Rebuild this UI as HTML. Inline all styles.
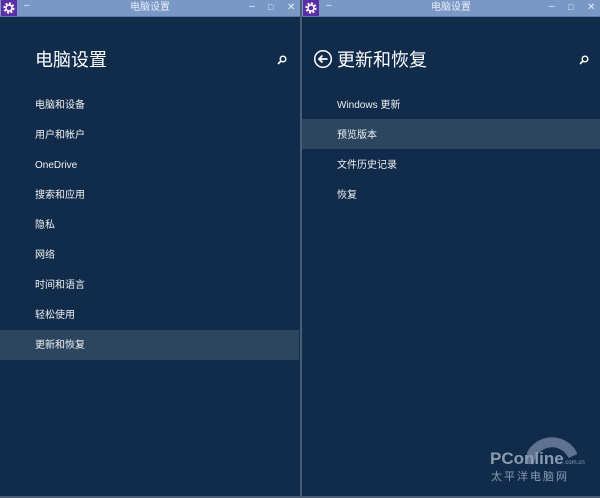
<!DOCTYPE html>
<html><head><meta charset="utf-8"><style>
*{margin:0;padding:0;box-sizing:border-box}
body{width:600px;height:498px;background:#4a5d75;position:relative;overflow:hidden;font-family:"Liberation Sans","Noto Sans CJK SC",sans-serif;color:#fff}
.win{position:absolute;top:0;height:496px;background:#112c4b}
.tb{position:absolute;left:0;right:0;top:0;height:17px;background:#7a98c6;border-bottom:1px solid #5a78a6}
.gear{position:absolute;left:1px;top:0;width:16px;height:16px;background:#5b2ea6}
.tt{position:absolute;left:0;right:0;top:2px;text-align:center;font-size:10px;line-height:12px;color:#e8eef8}
.btn{position:absolute;top:2px;font-size:10px;color:#e8eef8}
.h1{position:absolute;font-size:18px;line-height:22px;color:#fff}
.it{position:absolute;left:35px;font-size:10px;line-height:14px;color:#f0f0f0}
.hl{position:absolute;left:0;right:0;height:30px;background:#2d4660}
</style></head><body>
<div class="win" style="left:0;width:300px">
 <div class="tb"><div class="gear"><svg width="16" height="16" viewBox="0 0 16 16"><circle cx="8" cy="8" r="4.5" fill="none" stroke="#fff" stroke-width="2.2" stroke-dasharray="2 1.5"/><circle cx="8" cy="8" r="3" fill="none" stroke="#fff" stroke-width="1.4"/></svg></div>
 <div class="btn" style="left:24px;top:0">–</div><div class="tt">电脑设置</div>
 <div class="btn" style="left:249px;top:1px">–</div><div class="btn" style="left:268px;font-size:9px">□</div><div class="btn" style="left:287px">✕</div></div>
 <div class="h1" style="left:35px;top:49px">电脑设置</div>
 <svg style="position:absolute;left:277px;top:55px" width="10" height="10" viewBox="0 0 10 10"><circle cx="6" cy="4" r="2.8" fill="none" stroke="#fff" stroke-width="1.4"/><path d="M4 6L1 9" stroke="#fff" stroke-width="1.6"/></svg>
 <div class="hl" style="top:330px;right:1px"></div>
 <div class="it" style="top:99px">电脑和设备</div>
 <div class="it" style="top:129px">用户和帐户</div>
 <div class="it" style="top:159px">OneDrive</div>
 <div class="it" style="top:189px">搜索和应用</div>
 <div class="it" style="top:219px">隐私</div>
 <div class="it" style="top:249px">网络</div>
 <div class="it" style="top:279px">时间和语言</div>
 <div class="it" style="top:309px">轻松使用</div>
 <div class="it" style="top:339px">更新和恢复</div>
</div>
<div class="win" style="left:302px;width:298px">
 <div class="tb"><div class="gear"><svg width="16" height="16" viewBox="0 0 16 16"><circle cx="8" cy="8" r="4.5" fill="none" stroke="#fff" stroke-width="2.2" stroke-dasharray="2 1.5"/><circle cx="8" cy="8" r="3" fill="none" stroke="#fff" stroke-width="1.4"/></svg></div>
 <div class="btn" style="left:24px;top:0">–</div><div class="tt">电脑设置</div>
 <div class="btn" style="left:247px;top:1px">–</div><div class="btn" style="left:266px;font-size:9px">□</div><div class="btn" style="left:285px">✕</div></div>
 <svg style="position:absolute;left:11px;top:49px" width="20" height="20" viewBox="0 0 20 20"><circle cx="10" cy="10" r="8.3" fill="none" stroke="#fff" stroke-width="1.5"/><path d="M14.5 10H6M9.5 6.5L6 10l3.5 3.5" fill="none" stroke="#fff" stroke-width="1.8"/></svg>
 <div class="h1" style="left:35px;top:49px">更新和恢复</div>
 <svg style="position:absolute;left:277px;top:55px" width="10" height="10" viewBox="0 0 10 10"><circle cx="6" cy="4" r="2.8" fill="none" stroke="#fff" stroke-width="1.4"/><path d="M4 6L1 9" stroke="#fff" stroke-width="1.6"/></svg>
 <div class="hl" style="top:119px"></div>
 <div class="it" style="top:99px">Windows 更新</div>
 <div class="it" style="top:129px">预览版本</div>
 <div class="it" style="top:159px">文件历史记录</div>
 <div class="it" style="top:189px">恢复</div>
 <svg style="position:absolute;left:225px;top:436px" width="50" height="30" viewBox="0 0 50 30"><path d="M2 28A23 23 0 0 1 46 20" fill="none" stroke="#5f7390" stroke-width="10"/></svg>
 <div style="position:absolute;left:188px;top:449px;font-size:17px;line-height:20px;font-weight:bold;color:#8a9bb0">PConline<span style="font-size:6px;font-weight:normal">.com.cn</span></div>
 <div style="position:absolute;left:189px;top:470px;font-size:11px;line-height:14px;letter-spacing:2px;color:#8a9bb0">太平洋电脑网</div>
</div>
</body></html>
